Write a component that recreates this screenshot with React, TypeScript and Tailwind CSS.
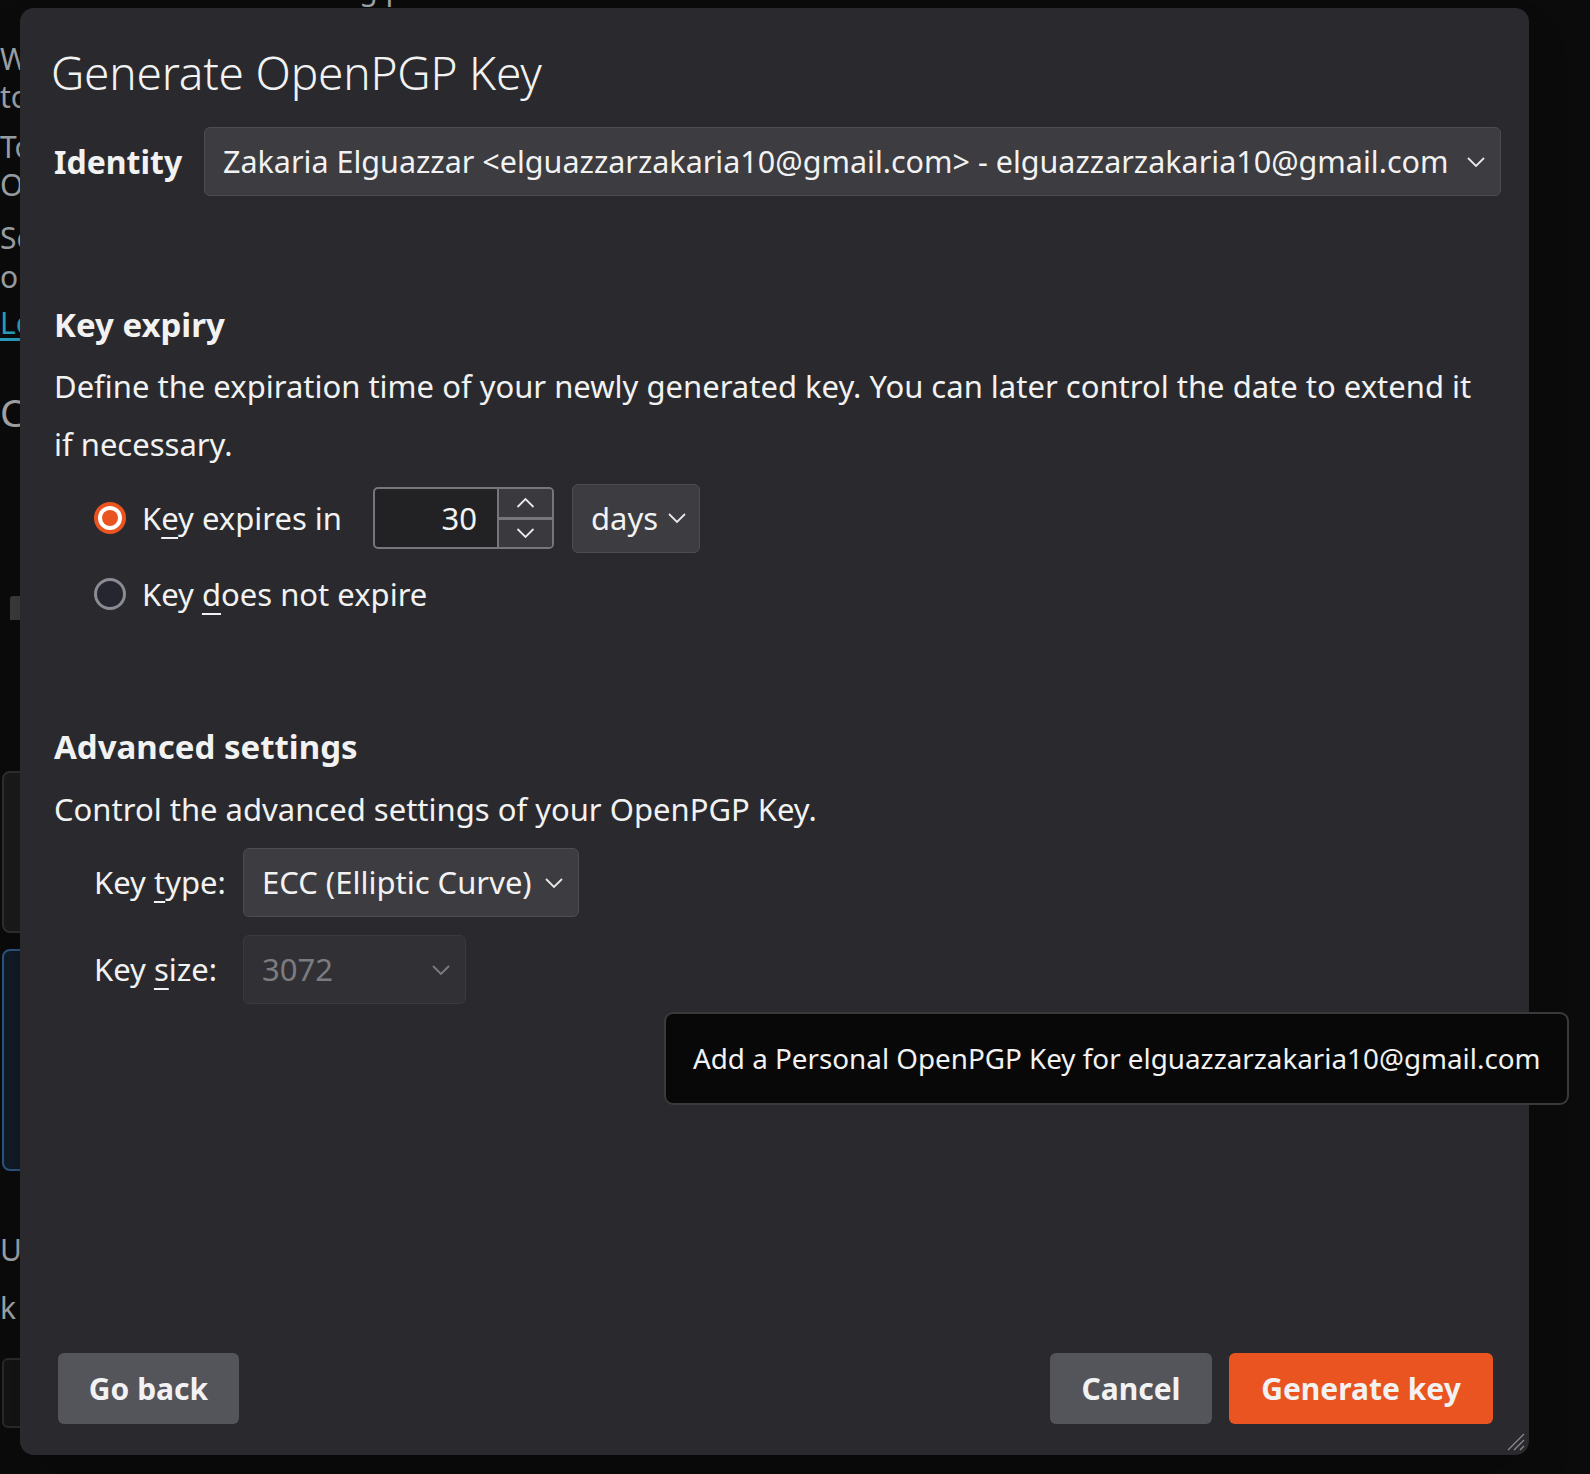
import { ReactNode } from "react"

const font = "font-['Noto_Sans','DejaVu_Sans',sans-serif]"

function Chevron({ className = "" }: { className?: string }) {
  return (
    <svg viewBox="0 0 20 12" className={className} fill="none" stroke="currentColor" strokeWidth="1.8">
      <polyline points="2,2 10,10 18,2" />
    </svg>
  )
}

function Combo({ children, className = "", disabled = false }: { children: ReactNode; className?: string; disabled?: boolean }) {
  return (
    <div
      className={
        "flex items-center justify-between rounded-[6px] border h-[69px] pl-[18px] pr-[14px] min-w-0 " +
        (disabled ? "bg-[#313135] border-[#3a3a3e] text-[#7c7c80]" : "bg-[#3c3c41] border-[#4c4c51] text-[#f2f2f2]") +
        " " +
        className
      }
    >
      <span className="whitespace-nowrap overflow-hidden">{children}</span>
      <Chevron className={"w-[20px] h-[12px] ml-[8px] shrink-0 " + (disabled ? "text-[#7c7c80]" : "text-[#e8e8e8]")} />
    </div>
  )
}

function Radio({ checked }: { checked?: boolean }) {
  if (checked) {
    return (
      <span className="w-[32px] h-[32px] rounded-full bg-[#e95420] flex items-center justify-center shrink-0">
        <span className="w-[24px] h-[24px] rounded-full bg-white flex items-center justify-center">
          <span className="w-[16px] h-[16px] rounded-full bg-[#e95420]" />
        </span>
      </span>
    )
  }
  return <span className="w-[32px] h-[32px] rounded-full border-[3px] border-[#8b8b93] bg-[#262630] shrink-0" />
}

function Mn({ children }: { children: ReactNode }) {
  return <span className="underline decoration-2 underline-offset-[7px]">{children}</span>
}

// window behind the dialog, only a sliver of it shows on the left
function Backdrop() {
  return (
    <div className="w-[20px] overflow-hidden flex flex-col text-[30px] text-[#9ea3a8] leading-none whitespace-nowrap">
      <div className="h-[44px]" />
      <span className="h-[38px]">W</span>
      <span className="h-[50px]">to</span>
      <span className="h-[38px]">To</span>
      <span className="h-[53px]">O</span>
      <span className="h-[39px]">Se</span>
      <span className="h-[46px]">o</span>
      <span className="h-[85px] text-[#2a9fbf] underline underline-offset-4">Le</span>
      <span className="h-[203px] text-[38px] text-[#a7a7a7]">C</span>
      <div className="h-[175px] w-[40px] flex">
        <span className="w-[24px] h-[24px] rounded-t-[3px] bg-[#3b3b3b] ml-[10px]" />
      </div>
      <div className="ml-[2px] w-[120px] h-[162px] shrink-0 rounded-[8px] border-2 border-[#2f2f2f] bg-[#1a1a1a]" />
      <div className="mt-[16px] ml-[2px] w-[120px] h-[222px] shrink-0 rounded-[8px] border-2 border-[#2a5480] bg-[#111b26]" />
      <div className="h-[64px]" />
      <span className="h-[58px]">U</span>
      <span className="h-[65px]">k</span>
      <div className="ml-[2px] w-[120px] h-[70px] shrink-0 rounded-[6px] border-2 border-[#2a2a2a] bg-[#141414]" />
    </div>
  )
}

export default function App() {
  return (
    <div className={"relative w-[1590px] h-[1474px] overflow-hidden bg-[#0b0b0b] " + font}>
      <Backdrop />
      <span className="absolute left-[300px] top-[-34px] text-[30px] text-[#9ea3a8]">using p</span>

      {/* dialog */}
      <div className="absolute left-[20px] top-[8px] w-[1509px] h-[1447px] rounded-[14px] bg-[#2a2a2e] shadow-2xl flex flex-col pt-[36px] pl-[31px] pr-[28px] pb-[31px] text-[#f2f2f2] text-[31px]">
        <h1 className="h-[56px] flex items-center text-[46px] font-light tracking-[-0.2px]">Generate OpenPGP Key</h1>

        <div className="mt-[27px] pl-[3px] flex items-center gap-[20px]">
          <span className="w-[130px] shrink-0 whitespace-nowrap font-bold text-[32px]">Identity</span>
          <Combo className="flex-1 text-[30.5px]">
            Zakaria Elguazzar &lt;elguazzarzakaria10@gmail.com&gt; - elguazzarzakaria10@gmail.com
          </Combo>
        </div>

        <div className="pl-[3px] flex flex-col">
          <h2 className="mt-[109px] h-[40px] flex items-center font-bold text-[33px]">Key expiry</h2>
          <p className="mt-[12px] leading-[58px] pr-[20px]">
            Define the expiration time of your newly generated key. You can later control the date to extend it if necessary.
          </p>

          <div className="mt-[10px] h-[70px] pl-[40px] flex items-center">
            <Radio checked />
            <span className="ml-[16px] w-[231px] shrink-0 whitespace-nowrap">
              K<Mn>e</Mn>y expires in
            </span>
            <div className="flex h-[62px] w-[181px] rounded-[5px] border-2 border-[#77777b] bg-[#222225] overflow-hidden">
              <span className="flex-1 flex items-center justify-end pr-[20px]">30</span>
              <div className="w-[55px] flex flex-col border-l-2 border-[#77777b]">
                <span className="flex-1 bg-[#3a3a3e] flex items-center justify-center border-b-[3px] border-[#77777b]">
                  <Chevron className="w-[21px] h-[12px] rotate-180 text-[#e8e8e8]" />
                </span>
                <span className="flex-1 bg-[#3a3a3e] flex items-center justify-center">
                  <Chevron className="w-[21px] h-[12px] text-[#e8e8e8]" />
                </span>
              </div>
            </div>
            <Combo className="ml-[18px] w-[128px] !pr-[12px]">days</Combo>
          </div>

          <div className="mt-[21px] h-[40px] pl-[40px] flex items-center">
            <Radio />
            <span className="ml-[16px]">
              Key <Mn>d</Mn>oes not expire
            </span>
          </div>

          <h2 className="mt-[113px] h-[40px] flex items-center font-bold text-[33px]">Advanced settings</h2>
          <p className="mt-[13px] leading-[58px]">Control the advanced settings of your OpenPGP Key.</p>

          <div className="mt-[10px] pl-[40px] flex items-center">
            <span className="w-[149px] shrink-0 whitespace-nowrap">
              Key <Mn>t</Mn>ype:
            </span>
            <Combo className="w-[336px]">ECC (Elliptic Curve)</Combo>
          </div>
          <div className="mt-[18px] pl-[40px] flex items-center">
            <span className="w-[149px] shrink-0 whitespace-nowrap">
              Key <Mn>s</Mn>ize:
            </span>
            <Combo className="w-[223px]" disabled>
              3072
            </Combo>
          </div>
        </div>

        <div className="flex-1" />

        <div className="flex items-center pl-[7px] pr-[8px] font-bold text-[30px]">
          <button className="h-[71px] w-[181px] rounded-[6px] bg-[#54545b]">Go back</button>
          <div className="flex-1" />
          <button className="h-[71px] w-[162px] rounded-[6px] bg-[#54545b]">Cancel</button>
          <button className="ml-[17px] h-[71px] w-[264px] rounded-[6px] bg-[#e95420]">Generate key</button>
        </div>

        {/* resize grip */}
        <svg className="absolute right-[4px] bottom-[4px] w-[20px] h-[20px]" viewBox="0 0 20 20" stroke="#8a8a8e" strokeWidth="1.3">
          <line x1="19" y1="3" x2="3" y2="19" />
          <line x1="19" y1="9" x2="9" y2="19" />
          <line x1="19" y1="15" x2="15" y2="19" />
        </svg>
      </div>

      {/* tooltip */}
      <div className="absolute left-[664px] top-[1012px] w-[905px] h-[93px] rounded-[9px] border-2 border-[#3a3a3c] bg-[#080808] flex items-center pl-[27px] text-[27.8px] text-[#f2f2f2] whitespace-nowrap">
        Add a Personal OpenPGP Key for elguazzarzakaria10@gmail.com
      </div>
    </div>
  )
}
